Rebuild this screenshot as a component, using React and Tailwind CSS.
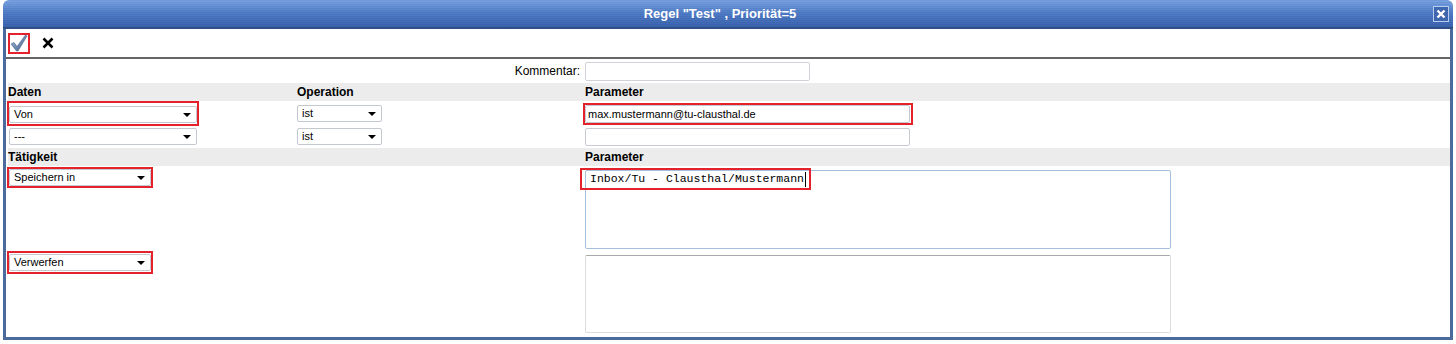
import React from 'react'

const Select = ({ label, w }) => (
  <div className={`flex h-[17px] items-center justify-between rounded-[2px] border border-[#c3c8d1] bg-white pl-[4px] pr-[5px] text-[11px] leading-none text-black ${w}`}>
    <span>{label}</span>
    <span className="h-0 w-0 border-x-[4px] border-t-[4px] border-x-transparent border-t-black" />
  </div>
)

const Header = ({ left, mid, right }) => (
  <div className="flex h-[18px] items-center bg-[#ececec] text-[12px] font-bold text-black">
    <div className="w-[289px]">{left}</div>
    <div className="w-[288px]">{mid}</div>
    <div className="flex-1">{right}</div>
  </div>
)

const CheckIcon = () => (
  <svg width="18" height="18" viewBox="0 0 18 18">
    <defs>
      <linearGradient id="chk" x1="0" y1="0" x2="1" y2="1">
        <stop offset="0" stopColor="#a7bcdb" />
        <stop offset="1" stopColor="#3d5a86" />
      </linearGradient>
    </defs>
    <path d="M1 10 L4 8.5 L7 12.5 L15.5 1 L17 2 L8 17 L6.5 17 Z" fill="url(#chk)" stroke="#4a6488" strokeWidth="0.6" />
  </svg>
)

export default function App() {
  return (
    <div className="h-[344px] w-[1456px] bg-white font-['Liberation_Sans',Arial,sans-serif]">
      <div className="ml-[3px] w-[1450px]">
        {/* title bar */}
        <div className="flex h-[29px] items-center rounded-t-[6px] border-b-2 border-[#2f4f86] bg-[repeating-linear-gradient(0deg,rgba(0,0,0,0.06)_0px,rgba(0,0,0,0.06)_1px,transparent_1px,transparent_2px),linear-gradient(#7aa5e6,#4f7cc8_50%,#3b64b0)]">
          <div className="flex-1 pl-[4px] text-center text-[13px] font-bold text-white">Regel "Test" , Priorität=5</div>
          <div className="mr-[4px] flex h-[16px] w-[16px] items-center justify-center border border-[#b9cdee] bg-[#3f67b0]">
            <svg width="10" height="10" viewBox="0 0 10 10">
              <path d="M1.5 1.5 L8.5 8.5 M8.5 1.5 L1.5 8.5" stroke="white" strokeWidth="2.4" />
            </svg>
          </div>
        </div>

        <div className="h-[311px] border-x-[3px] border-b-[3px] border-[#4c6a9c] bg-white">
          {/* toolbar */}
          <div className="flex h-[30px] items-center gap-[12px] border-b-2 border-b-[#666] pl-[2px]">
            <div className="flex h-[21px] w-[22px] items-center justify-center border-2 border-[#e3222c]">
              <CheckIcon />
            </div>
            <svg width="12" height="12" viewBox="0 0 12 12">
              <path d="M1.5 1.5 L10.5 10.5 M10.5 1.5 L1.5 10.5" stroke="black" strokeWidth="2.6" />
            </svg>
          </div>

          <div className="pl-[2px] text-[11px] text-black">
            {/* Kommentar */}
            <div className="flex h-[24px] items-center">
              <div className="w-[577px] pr-[5px] text-right text-[12px]">Kommentar:</div>
              <div className="h-[19px] w-[225px] rounded-[2px] border border-[#d0d3d8] bg-white" />
            </div>

            <Header left="Daten" mid="Operation" right="Parameter" />

            <div className="flex h-[25px] items-start">
              <div className="w-[289px]">
                <div className="-ml-px w-[192px] border-2 border-[#e3222c] pb-px pt-[3px]">
                  <Select label="Von" w="w-[188px]" />
                </div>
              </div>
              <div className="w-[288px] pt-[4px]">
                <Select label="ist" w="w-[85px]" />
              </div>
              <div className="flex-1 pt-[2px]">
                <div className="-ml-[2px] w-[330px] border-2 border-[#e3222c] pr-px">
                  <div className="flex h-[18px] items-center rounded-[2px] border border-[#c3c8d1] bg-white pl-[2px] text-[11px]">max.mustermann@tu-clausthal.de</div>
                </div>
              </div>
            </div>

            <div className="flex h-[22px] items-start pt-[2px]">
              <div className="w-[289px] pl-px">
                <Select label="---" w="w-[188px]" />
              </div>
              <div className="w-[288px]">
                <Select label="ist" w="w-[85px]" />
              </div>
              <div className="flex-1">
                <div className="h-[18px] w-[325px] rounded-[2px] border border-[#c8ccd2] bg-white" />
              </div>
            </div>

            <Header left="Tätigkeit" mid="" right="Parameter" />

            <div className="flex h-[85px] items-start">
              <div className="w-[577px] pt-px">
                <div className="-ml-px w-[146px] border-2 border-[#e3222c]">
                  <Select label="Speichern in" w="w-[142px]" />
                </div>
              </div>
              <div className="relative mt-[4px] h-[79px] w-[586px] rounded-[2px] border border-[#a6bfdc] bg-white">
                <div className="absolute -left-[6px] -top-[3px] flex h-[22px] w-[231px] items-center border-2 border-[#e3222c] pl-[8px] font-['Liberation_Mono',monospace] text-[11.5px] leading-none">
                  Inbox/Tu - Clausthal/Mustermann
                  <span className="ml-px h-[15px] w-px bg-black" />
                </div>
              </div>
            </div>

            <div className="flex h-[82px] items-start">
              <div className="w-[577px]">
                <div className="-ml-px w-[146px] border-2 border-[#e3222c] py-px">
                  <Select label="Verwerfen" w="w-[142px]" />
                </div>
              </div>
              <div className="mt-[4px] h-[78px] w-[586px] rounded-[2px] border border-[#dcdcdc] border-t-[#a8a8a8] bg-white" />
            </div>
          </div>
        </div>
      </div>
    </div>
  )
}
